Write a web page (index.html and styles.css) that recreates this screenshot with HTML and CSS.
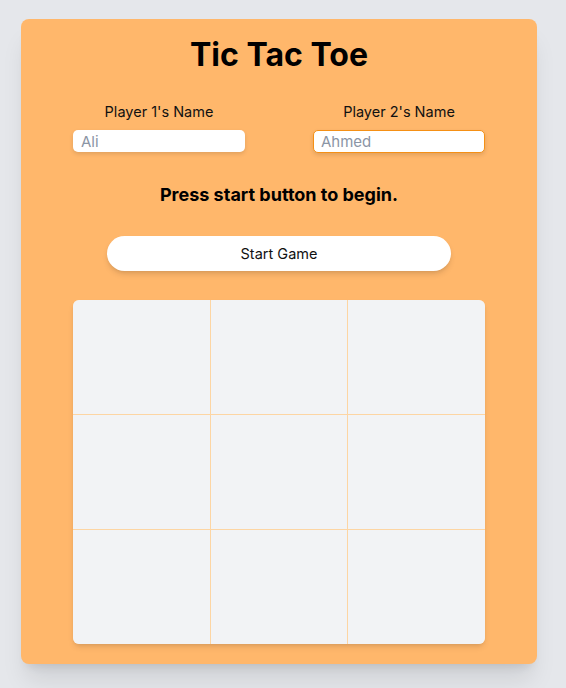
FILE: index.html
```html
<!DOCTYPE html>
<html lang="en">
<head>
<meta charset="utf-8">
<title>Tic Tac Toe</title>
<link rel="stylesheet" href="styles.css">
</head>
<body>
<main class="card">
  <h1 class="title">Tic Tac Toe</h1>
  <div class="players">
    <div class="player">
      <label class="player-label" for="p1">Player 1's Name</label>
      <input class="player-input" id="p1" type="text" placeholder="Ali">
    </div>
    <div class="player">
      <label class="player-label" for="p2">Player 2's Name</label>
      <input class="player-input player-input--focused" id="p2" type="text" placeholder="Ahmed" autofocus>
    </div>
  </div>
  <p class="status">Press start button to begin.</p>
  <button class="start-btn" type="button">Start Game</button>
  <div class="board">
    <div class="cell"></div><div class="cell"></div><div class="cell"></div>
    <div class="cell"></div><div class="cell"></div><div class="cell"></div>
    <div class="cell"></div><div class="cell"></div><div class="cell"></div>
  </div>
</main>
</body>
</html>
```
FILE: styles.css
```css
* { box-sizing: border-box; }

body {
  margin: 0;
  padding: 19px 0 40px 21px;
  background: #e5e7eb;
  font-family: Inter, "Noto Sans", sans-serif;
  color: #000;
}

.card {
  width: 516px;
  padding: 16px 52px 20px;
  background: #ffb76b;
  border-radius: 8px;
  box-shadow: 0 20px 25px -5px rgba(0,0,0,0.1), 0 8px 10px -6px rgba(0,0,0,0.1);
  display: flex;
  flex-direction: column;
}

.title {
  margin: 0;
  font-size: 32px;
  font-weight: 700;
  line-height: normal;
  text-align: center;
}

.players {
  display: flex;
  justify-content: space-between;
  margin-top: 29px;
}

.player {
  display: flex;
  flex-direction: column;
  align-items: center;
  gap: 9px;
  width: 172px;
}

.player-label {
  font-size: 14.5px;
  line-height: 18px;
  color: #111;
}

.player-input {
  width: 172px;
  height: 22px;
  padding: 0 7px;
  border: 1px solid transparent;
  border-radius: 5px;
  background: #fff;
  font-family: Inter, "Noto Sans", sans-serif;
  font-size: 15px;
  color: #111;
  box-shadow: 0 2px 4px rgba(0,0,0,0.12);
  outline: none;
}

.player-input::placeholder { color: #8b95a5; }

.player-input--focused,
.player-input:focus {
  border-color: #f59015;
  height: 23px;
}

.status {
  margin: 31px 0 0;
  font-size: 18px;
  font-weight: 700;
  line-height: normal;
  text-align: center;
}

.start-btn {
  align-self: center;
  margin-top: 31px;
  width: 344px;
  height: 35px;
  border: none;
  border-radius: 18px;
  background: #fff;
  font-family: Inter, "Noto Sans", sans-serif;
  font-size: 14.5px;
  color: #111;
  box-shadow: 0 4px 6px -1px rgba(0,0,0,0.12), 0 2px 4px -2px rgba(0,0,0,0.1);
}

.board {
  margin-top: 29px;
  height: 344px;
  display: grid;
  grid-template-columns: repeat(3, 1fr);
  grid-template-rows: repeat(3, 1fr);
  gap: 1px;
  background: #fdd5a3;
  border-radius: 6px;
  overflow: hidden;
  box-shadow: 0 4px 6px -1px rgba(0,0,0,0.1), 0 2px 4px -2px rgba(0,0,0,0.1);
}

.cell { background: #f2f3f5; }
```
